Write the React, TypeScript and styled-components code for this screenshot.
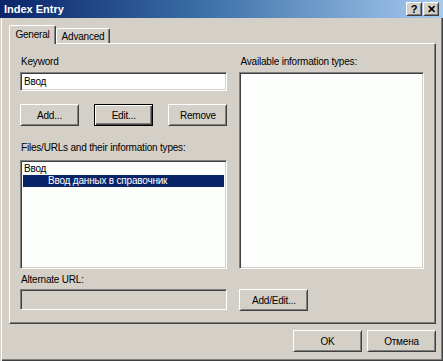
import React from "react";
import styled, { createGlobalStyle, css } from "styled-components";

const Global = createGlobalStyle`
  html, body { margin: 0; padding: 0; background: #d4d0c8; }
  body { font-family: "Liberation Sans", Arial, sans-serif; font-size: 10px; letter-spacing: -0.2px; color: #000; }
  * { box-sizing: border-box; }
`;

const raised = css`
  border: 1px solid;
  border-color: #ffffff #404040 #404040 #ffffff;
  box-shadow: inset 1px 1px 0 #d4d0c8, inset -1px -1px 0 #808080;
`;

const sunken = css`
  border: 1px solid;
  border-color: #808080 #ffffff #ffffff #808080;
  box-shadow: inset 1px 1px 0 #404040, inset -1px -1px 0 #d4d0c8;
`;

const Window = styled.div`
  width: 443px;
  height: 361px;
  background: #d4d0c8;
  display: flex;
  flex-direction: column;
  box-shadow: inset 1px 0 0 #d4d0c8, inset 2px 0 0 #ffffff, inset -1px -1px 0 #404040,
    inset -2px -2px 0 #808080;
  overflow: hidden;
`;

const TitleBar = styled.div`
  height: 18px;
  flex: none;
  display: flex;
  align-items: center;
  padding: 0 4px 0 4px;
  background: linear-gradient(to right, #0a246a 0%, #3a6ea5 45%, #a6caf0 100%);
`;

const Title = styled.div`
  flex: 1;
  color: #fff;
  font-weight: bold;
  font-size: 11px;
  letter-spacing: 0;
`;

const TitleButtons = styled.div`
  display: flex;
  gap: 1px;
`;

const CaptionButton = styled.div`
  ${raised};
  width: 16px;
  height: 14px;
  background: #d4d0c8;
  display: flex;
  align-items: center;
  justify-content: center;
  font-weight: bold;
  font-size: 11px;
  letter-spacing: 0;
  line-height: 1;
`;

const Body = styled.div`
  flex: 1;
  display: flex;
  flex-direction: column;
  padding: 7px 7px 0 9px;
`;

const TabStrip = styled.div`
  display: flex;
  align-items: flex-end;
  height: 18px;
  position: relative;
  z-index: 1;
`;

const Tab = styled.div<{ $active?: boolean }>`
  background: #d4d0c8;
  border-top: 1px solid #ffffff;
  border-left: 1px solid #ffffff;
  border-right: 1px solid #404040;
  box-shadow: inset -1px 0 0 #808080;
  border-radius: 2px 2px 0 0;
  display: flex;
  align-items: center;
  justify-content: center;
  white-space: nowrap;
  ${(p) =>
    p.$active
      ? css`
          height: 19px;
          margin-bottom: -1px;
          padding-bottom: 2px;
          width: 47px;
        `
      : css`
          height: 15px;
          width: 54px;
        `}
`;

const Panel = styled.div`
  ${raised};
  box-shadow: inset -1px -1px 0 #808080;
  width: 427px;
  height: 281px;
  padding: 11px 11px 0 10px;
  display: flex;
  gap: 12px;
`;

const Column = styled.div<{ $w: number }>`
  width: ${(p) => p.$w}px;
  display: flex;
  flex-direction: column;
`;

const Label = styled.div<{ $mt?: number }>`
  height: 13px;
  line-height: 13px;
  margin-top: ${(p) => p.$mt ?? 0}px;
  padding-left: 1px;
  white-space: nowrap;
`;

const TextField = styled.div<{ $mt?: number; $disabled?: boolean }>`
  ${sunken};
  height: ${(p) => (p.$disabled ? 21 : 19)}px;
  margin-top: ${(p) => p.$mt ?? 0}px;
  background: ${(p) => (p.$disabled ? "#d4d0c8" : "#ffffff")};
  padding: 0 3px;
  line-height: 17px;
`;

const ButtonRow = styled.div<{ $mt?: number }>`
  display: flex;
  justify-content: space-between;
  margin-top: ${(p) => p.$mt ?? 0}px;
`;

const Button = styled.div<{ $w?: number; $default?: boolean; $mt?: number }>`
  width: ${(p) => p.$w ?? 59}px;
  height: 22px;
  margin-top: ${(p) => p.$mt ?? 0}px;
  background: #d4d0c8;
  display: flex;
  align-items: center;
  justify-content: center;
  ${(p) =>
    p.$default
      ? css`
          border: 1px solid #000;
          box-shadow: inset 1px 1px 0 #ffffff, inset -1px -1px 0 #404040,
            inset -2px -2px 0 #808080;
        `
      : raised}
`;

const ListBox = styled.div<{ $h: number; $mt?: number }>`
  ${sunken};
  height: ${(p) => p.$h}px;
  margin-top: ${(p) => p.$mt ?? 0}px;
  background: #fcfefc;
  padding: 2px;
`;

const ListItem = styled.div<{ $selected?: boolean; $indent?: number }>`
  height: 12px;
  line-height: 12px;
  padding-left: ${(p) => p.$indent ?? 1}px;
  white-space: nowrap;
  background: ${(p) => (p.$selected ? "#0a246a" : "transparent")};
  color: ${(p) => (p.$selected ? "#ffffff" : "#000000")};
`;

const Footer = styled.div`
  display: flex;
  justify-content: flex-end;
  gap: 5px;
  padding-top: 6px;
`;

export default function App() {
  return (
    <>
      <Global />
      <Window>
        <TitleBar>
          <Title>Index Entry</Title>
          <TitleButtons>
            <CaptionButton>?</CaptionButton>
            <CaptionButton>✕</CaptionButton>
          </TitleButtons>
        </TitleBar>
        <Body>
          <TabStrip>
            <Tab $active>General</Tab>
            <Tab>Advanced</Tab>
          </TabStrip>
          <Panel>
            <Column $w={208}>
              <Label>Keyword</Label>
              <TextField $mt={4}>Ввод</TextField>
              <ButtonRow $mt={13}>
                <Button>Add...</Button>
                <Button $default>Edit...</Button>
                <Button>Remove</Button>
              </ButtonRow>
              <Label $mt={15}>Files/URLs and their information types:</Label>
              <ListBox $h={109} $mt={6}>
                <ListItem>Ввод</ListItem>
                <ListItem $selected $indent={25}>
                  Ввод данных в справочник
                </ListItem>
              </ListBox>
              <Label $mt={4}>Alternate URL:</Label>
              <TextField $mt={3} $disabled />
            </Column>
            <Column $w={185}>
              <Label>Available information types:</Label>
              <ListBox $h={197} $mt={4} />
              <Button $w={69} $mt={20}>
                Add/Edit...
              </Button>
            </Column>
          </Panel>
          <Footer>
            <Button $w={69}>OK</Button>
            <Button $w={69}>Отмена</Button>
          </Footer>
        </Body>
      </Window>
    </>
  );
}
